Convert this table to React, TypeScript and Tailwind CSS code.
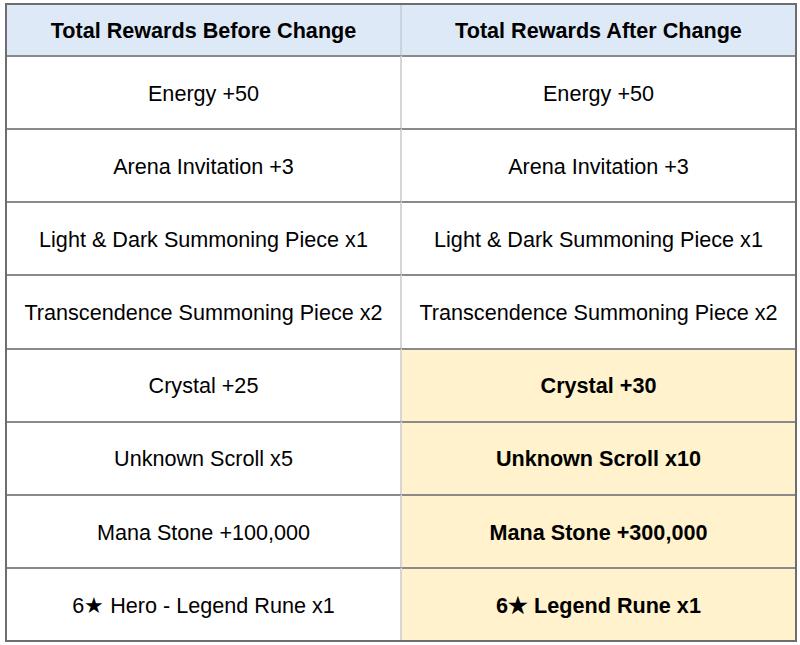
const rows: { before: string; after: string; changed?: boolean }[] = [
  { before: "Energy +50", after: "Energy +50" },
  { before: "Arena Invitation +3", after: "Arena Invitation +3" },
  { before: "Light & Dark Summoning Piece x1", after: "Light & Dark Summoning Piece x1" },
  { before: "Transcendence Summoning Piece x2", after: "Transcendence Summoning Piece x2" },
  { before: "Crystal +25", after: "Crystal +30", changed: true },
  { before: "Unknown Scroll x5", after: "Unknown Scroll x10", changed: true },
  { before: "Mana Stone +100,000", after: "Mana Stone +300,000", changed: true },
  { before: "6★ Hero - Legend Rune x1", after: "6★ Legend Rune x1", changed: true },
];

export default function App() {
  return (
    <div className="w-[800px] h-[645px] bg-white pt-[3px] pl-[5px] font-['Liberation_Sans',Arial,sans-serif] text-[21.6px] text-black">
      <div className="w-[792px] h-[639px] border-2 border-[#6e6e6e] grid grid-cols-[395px_1fr] grid-rows-[50px_repeat(8,1fr)]">
        {/* Header */}
        <div className="bg-[#dde9f6] flex items-center justify-center pt-[2px] font-bold border-r-2 border-[#c9d3dd]">
          Total Rewards Before Change
        </div>
        <div className="bg-[#dde9f6] flex items-center justify-center pt-[2px] font-bold">
          Total Rewards After Change
        </div>

        {rows.map((r, i) => (
          <div key={i} className="contents">
            <div className="flex items-center justify-center pt-[3px] border-t-2 border-r-2 border-t-[#8a8a8a] border-r-[#d6d6d6]">
              {r.before}
            </div>
            <div
              className={
                r.changed
                  ? "flex items-center justify-center pt-[3px] border-t-2 border-[#8a8a8a] bg-[#fff2cc] font-bold"
                  : "flex items-center justify-center pt-[3px] border-t-2 border-[#8a8a8a]"
              }
            >
              {r.after}
            </div>
          </div>
        ))}
      </div>
    </div>
  );
}
